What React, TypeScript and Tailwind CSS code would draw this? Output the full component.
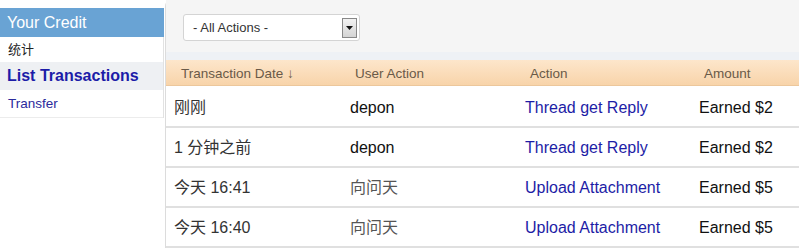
import React from 'react';

interface Txn {
    date: string;
    user: string;
    userCjk: boolean;
    action: string;
    amount: string;
}

const rows: Txn[] = [
    { date: '刚刚', user: 'depon', userCjk: false, action: 'Thread get Reply', amount: 'Earned $2' },
    { date: '1 分钟之前', user: 'depon', userCjk: false, action: 'Thread get Reply', amount: 'Earned $2' },
    { date: '今天 16:41', user: '向问天', userCjk: true, action: 'Upload Attachment', amount: 'Earned $5' },
    { date: '今天 16:40', user: '向问天', userCjk: true, action: 'Upload Attachment', amount: 'Earned $5' },
];

const font = "font-['Liberation_Sans','Noto_Sans_CJK_SC',sans-serif]";

const Sidebar: React.FC = () => (
    <div className="w-[164px] shrink-0 pt-[8px]">
        <div className="h-[29px] bg-[#69a3d4] pl-[7px] text-[16px] leading-[29px] text-white">Your Credit</div>
        <div className="border-r border-[#e2e2e2]">
            <div className="h-[25px] pl-[8px] text-[13px] leading-[25px] text-[#222]">统计</div>
            <div className="h-[28px] bg-[#eef0f3] pl-[7px] text-[16px] font-bold leading-[28px] text-[#1c1ca8]">
                List Transactions
            </div>
            <div className="h-[28px] border-b border-[#ececec] pl-[8px] text-[13.5px] leading-[27px] text-[#2b2b9c]">
                Transfer
            </div>
        </div>
    </div>
);

const Filter: React.FC = () => (
    <div className="h-[52px] bg-[#f5f5f5] pl-[17px] pt-[14px]">
        <div className="flex h-[27px] w-[177px] items-center justify-between rounded-[3px] border border-[#d4d4d4] bg-white pl-[9px] pr-[2px]">
            <span className="text-[13px] text-[#333]">- All Actions -</span>
            <span className="flex h-[20px] w-[15px] items-center justify-center border border-[#888] bg-gradient-to-b from-[#f2f2f2] to-[#d4d4d4]">
                <svg width="7" height="4" viewBox="0 0 7 4">
                    <path d="M0 0h7L3.5 4z" fill="#111" />
                </svg>
            </span>
        </div>
    </div>
);

export default function App() {
    return (
        <div className={`flex h-[248px] w-[799px] overflow-hidden bg-white ${font}`}>
            <Sidebar />
            <div className="ml-[1px] flex-1 rounded-tl-[6px] border-l border-[#dcdcdc]">
                <Filter />
                <div className="h-[8px] bg-[#eef1f5]" />
                <div className="grid h-[26px] grid-cols-[176px_175px_174px_1fr] border-b border-[#ecc79c] bg-gradient-to-b from-[#fde6cb] to-[#f8d4aa] pt-[1px] text-[13.5px] leading-[25px] text-[#6a5a48]">
                    <div className="pl-[15px]">Transaction Date ↓</div>
                    <div className="pl-[13px]">User Action</div>
                    <div className="pl-[13px]">Action</div>
                    <div className="pl-[13px]">Amount</div>
                </div>
                {rows.map((r, i) => (
                    <div
                        key={i}
                        className={`grid grid-cols-[176px_175px_174px_1fr] items-center border-b-2 border-[#e0e0e0] text-[16px] ${i === 0 ? 'h-[42px] pt-[3px]' : 'h-[40px] pt-[2px]'}`}
                    >
                        <div className="pl-[8px] text-[#333]">{r.date}</div>
                        <div className={`pl-[8px] ${r.userCjk ? 'text-[#555]' : 'text-[#111]'}`}>{r.user}</div>
                        <div className="pl-[8px] text-[#1d1da6]">{r.action}</div>
                        <div className="pl-[8px] text-[#111]">{r.amount}</div>
                    </div>
                ))}
            </div>
        </div>
    );
}
